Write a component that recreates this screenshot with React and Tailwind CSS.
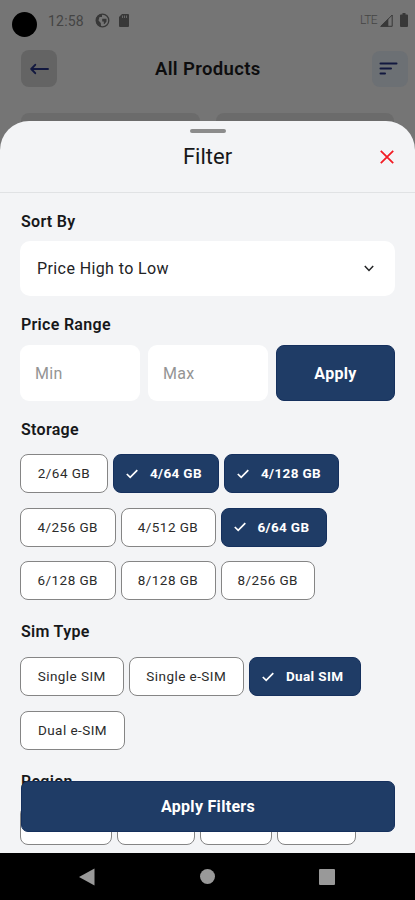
import React from 'react';
import clsx from 'clsx';

const storage = [
  [
    { label: "2/64 GB", width: "w-[88px]" },
    { label: "4/64 GB", width: "w-[106px]", active: true },
    { label: "4/128 GB", width: "w-[115px]", active: true },
  ],
  [
    { label: "4/256 GB", width: "w-[95.5px]" },
    { label: "4/512 GB", width: "w-[95px]" },
    { label: "6/64 GB", width: "w-[106.5px]", active: true },
  ],
  [
    { label: "6/128 GB", width: "w-[95.5px]" },
    { label: "8/128 GB", width: "w-[95px]" },
    { label: "8/256 GB", width: "w-[94.5px]" },
  ],
];

const simTypes = [
  [
    { label: "Single SIM", width: "w-[103.5px]" },
    { label: "Single e-SIM", width: "w-[115.5px]" },
    { label: "Dual SIM", width: "w-[112px]", active: true },
  ],
  [{ label: "Dual e-SIM", width: "w-[105px]" }],
];

const regionWidths = ["w-[92px]", "w-[78px]", "w-[72px]", "w-[79px]"];

function Chip({ label, width, active }) {
  return (
    <button
      className={clsx(
        "h-[39px] shrink-0 rounded-lg flex items-center whitespace-nowrap",
        width,
        active
          ? "bg-[#1f3c66] border border-[#15305d] text-white text-[13.5px] font-bold pl-3 tracking-[0.35px]"
          : "bg-white border border-[#858585] text-[#2b2b2b] text-[13.5px] justify-center tracking-[0.45px]"
      )}
    >
      {active && (
        <svg className="w-3 h-3 mr-3" viewBox="0 0 12 12" fill="none" stroke="white" strokeWidth="1.7">
          <path d="M0.8 6 L4.2 9.4 L11.3 2.2" />
        </svg>
      )}
      {label}
    </button>
  );
}

function ChipRows({ rows }) {
  return (
    <div className="flex flex-col gap-[14.5px]">
      {rows.map((row, idx) => (
        <div key={idx} className="flex gap-[5px]">
          {row.map((chip) => (
            <Chip key={chip.label} {...chip} />
          ))}
        </div>
      ))}
    </div>
  );
}

function Heading({ children }) {
  return <h3 className="h-5 pl-[1px] text-[16px] leading-5 font-semibold tracking-[0.3px] text-[#17181a]">{children}</h3>;
}

function StatusBar() {
  return (
    <div className="h-[50px] pl-3 pr-[7px] flex items-start text-[#444444]">
      <span className="mt-3 w-[25px] h-[25px] rounded-full bg-black" />
      <span className="mt-[11px] ml-[11px] w-[46px] text-[14px] leading-5 tracking-[0.2px]">12:58</span>
      <svg className="mt-[13px] ml-[1px] w-[15px] h-[15px]" viewBox="0 0 15 15">
        <circle cx="7.5" cy="7.5" r="6.3" fill="none" stroke="#383838" strokeWidth="1.3" />
        <path d="M7 1 A6.5 6.5 0 0 0 4 13 L6 13.5 L5.8 10 L3.5 7.5 L4.5 4 L7 4 Z" fill="#383838" />
        <path d="M7.2 5.8 H11.5 V8.6 L9.6 11 H8.8 V8.6 H7.2 Z" fill="#383838" />
      </svg>
      <svg className="mt-[13px] ml-[8px] w-[12px] h-[15px]" viewBox="0 0 12 15">
        <path d="M4 1 H10 Q11 1 11 2 V13 Q11 14 10 14 H2 Q1 14 1 13 V4 Z" fill="#383838" />
        <path d="M4.5 2.5 V5 M6.5 2.5 V5 M8.5 2.5 V5" stroke="#757575" strokeWidth="0.8" />
      </svg>
      <span className="mt-[10px] ml-auto text-[12px] leading-5 font-light tracking-[-0.6px]">LTE</span>
      <svg className="mt-[14px] ml-[3px] w-[13px] h-[13px]" viewBox="0 0 13 13">
        <path d="M1 12.3 H12.2 V1 Z" fill="none" stroke="#383838" strokeWidth="1" />
        <path d="M0 12.8 H8.3 V4.5 Z" fill="#383838" />
      </svg>
      <svg className="mt-[13px] ml-[7px] w-[8px] h-[14px]" viewBox="0 0 8 14">
        <path d="M2.5 0 H5.5 V1.5 H7 Q8 1.5 8 2.5 V13 Q8 14 7 14 H1 Q0 14 0 13 V2.5 Q0 1.5 1 1.5 H2.5 Z" fill="#383838" />
      </svg>
    </div>
  );
}

function AppBar() {
  return (
    <div className="h-[37px] pl-[21px] pr-[7px] flex items-center">
      <div className="w-9 h-[37px] rounded-lg bg-[#646464] flex items-center justify-center">
        <svg className="w-[19px] h-3" viewBox="0 0 19 12" fill="none" stroke="#12183f" strokeWidth="1.9" strokeLinecap="round" strokeLinejoin="round">
          <path d="M18 6 H1.2 M5.2 1.8 L1.2 6 L5.2 10.2" />
        </svg>
      </div>
      <h1 className="ml-[98px] text-[18.5px] leading-6 font-semibold tracking-[0.35px] text-[#0d0d0e]">All Products</h1>
      <div className="ml-auto w-9 h-9 rounded-lg bg-[#6c7074] flex items-center justify-center">
        <svg className="mr-[3px] w-[19px] h-[14px]" viewBox="0 0 19 14" stroke="#12183f" strokeWidth="2" strokeLinecap="round">
          <path d="M1.5 1.5 H17.5 M1.5 6.5 H12 M1.5 11.5 H6" />
        </svg>
      </div>
    </div>
  );
}

export default function App() {
  return (
    <div className="relative w-[415px] h-[900px] overflow-hidden bg-[#757575] font-[Roboto,sans-serif] flex flex-col">
      <StatusBar />
      <AppBar />
      <div className="mt-[26px] h-20 px-[21px] flex gap-4">
        <div className="flex-1 rounded-lg bg-[#6b6b6b]" />
        <div className="flex-1 rounded-lg bg-[#6b6b6b]" />
      </div>

      {/* Bottom sheet */}
      <div className="absolute inset-x-0 top-[121px] h-[732px] rounded-t-[29px] bg-[#f3f4f6] overflow-hidden">
        <div className="h-[72px] border-b border-[#e0e2e4] flex flex-col items-center">
          <span className="mt-2 w-9 h-1 rounded-full bg-[#8c8c8c]" />
          <div className="mt-[10px] w-full pl-[34px] pr-[21px] flex items-center justify-between">
            <span className="w-[1px]" />
            <h2 className="text-[22px] leading-7 text-[#17181a]">Filter</h2>
            <svg className="w-[14px] h-[14px]" viewBox="0 0 14 14" stroke="#f21c24" strokeWidth="1.8">
              <path d="M0.8 0.8 L13.2 13.2 M13.2 0.8 L0.8 13.2" />
            </svg>
          </div>
        </div>

        <div className="px-5 pt-[19px] flex flex-col">
          <Heading>Sort By</Heading>
          <div className="mt-[9px] h-[55px] w-[375px] rounded-[10px] bg-white pl-[17px] pr-[21px] flex items-center justify-between">
            <span className="pt-[1px] text-[16px] tracking-[0.4px] text-[#222325]">Price High to Low</span>
            <svg className="w-[10px] h-[7px]" viewBox="0 0 10 7" fill="none" stroke="#222325" strokeWidth="1.5">
              <path d="M0.8 1 L5 5.4 L9.2 1" />
            </svg>
          </div>

          <div className="mt-[19px]">
            <Heading>Price Range</Heading>
          </div>
          <div className="mt-[10px] w-[375px] h-[56px] flex gap-2 text-[16px]">
            <div className="w-[120px] rounded-[9px] bg-white pl-[15px] pt-[2px] flex items-center tracking-[0.3px] text-[#949494]">Min</div>
            <div className="w-[120px] rounded-[9px] bg-white pl-[15px] pt-[2px] flex items-center tracking-[0.3px] text-[#949494]">Max</div>
            <button className="w-[119px] rounded-lg bg-[#1f3c66] border border-[#15305d] text-white font-bold pt-[1px] text-[16px] tracking-[0.3px]">Apply</button>
          </div>

          <div className="mt-[19px] mb-[14px]">
            <Heading>Storage</Heading>
          </div>
          <ChipRows rows={storage} />

          <div className="mt-[22px] mb-[15px]">
            <Heading>Sim Type</Heading>
          </div>
          <ChipRows rows={simTypes} />

          <div className="mt-[22px] mb-[14px]">
            <Heading>Region</Heading>
          </div>
          <div className="flex gap-[5px]">
            {regionWidths.map((width, idx) => (
              <div key={idx} className={clsx("h-[39px] rounded-lg bg-white border border-[#858585]", width)} />
            ))}
          </div>
        </div>

        <button className="absolute left-[21px] bottom-[21px] w-[374px] h-[51px] rounded-[7px] bg-[#1f3c66] border border-[#15305d] text-white font-bold pt-[1px] text-[16px] tracking-[0.3px]">
          Apply Filters
        </button>
      </div>

      {/* Android navigation */}
      <div className="absolute inset-x-0 bottom-0 h-[47px] bg-black flex items-center justify-center">
        <svg className="w-[16px] h-[18px]" viewBox="0 0 16 18" fill="#999999">
          <path d="M0 9 L15.5 0.5 V17.5 Z" />
        </svg>
        <span className="ml-[105px] w-[15px] h-[15px] rounded-full bg-[#999999]" />
        <span className="ml-[104px] mr-[1px] w-4 h-4 rounded-[1px] bg-[#999999]" />
      </div>
    </div>
  );
}
